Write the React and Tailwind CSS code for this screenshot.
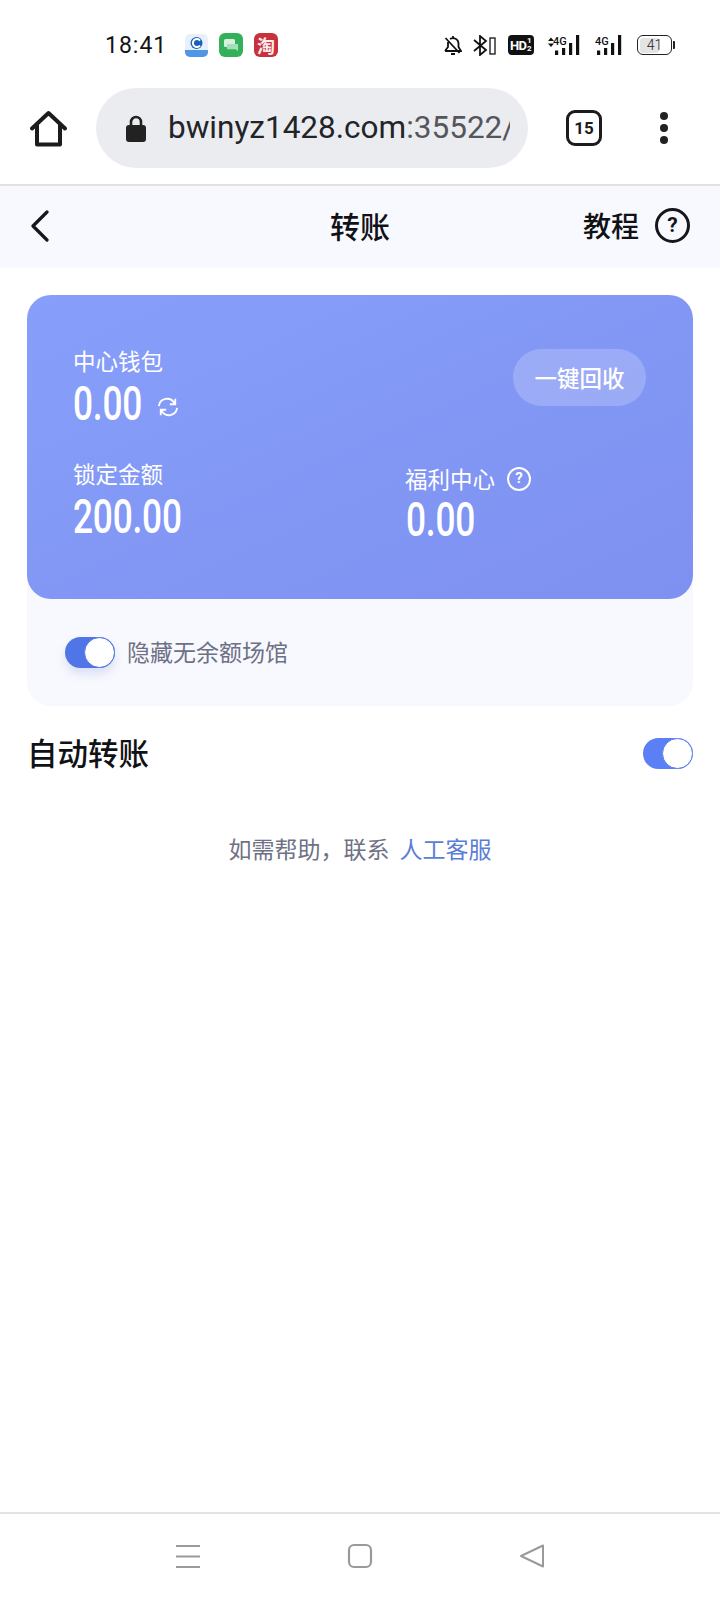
import React from "react";

const font = { fontFamily: '"Noto Sans CJK SC", Roboto, sans-serif' };

function Toggle({ shadow, dark }) {
  return (
    <div className={`relative flex h-[31px] w-[50px] shrink-0 items-center justify-end rounded-full ${dark ? "bg-[#5075e6]" : "bg-[#5b80f5]"} ${shadow ? "shadow-[0_6px_10px_rgba(90,110,200,0.18)]" : ""}`}>
      <div className={`box-border h-[31px] w-[31px] rounded-full border ${dark ? "border-[#5075e6]" : "border-[#5b80f5]"} bg-white`} />
    </div>
  );
}

function Amount({ children }) {
  return (
    <div className="mt-[8px] h-[44px] origin-left scale-x-[0.72] font-['Roboto'] text-[49px] leading-[44px] font-medium tracking-[-0.3px] text-white">
      {children}
    </div>
  );
}

function Signal({ up }) {
  return (
    <svg width={up ? 38 : 30} height="20" viewBox={up ? "0 0 38 20" : "0 0 30 20"} fill="#111">
      {up && <path d="M3 6 6 2.500 9 6ZM3 8.500 6 12 9 8.500Z" />}
      <g transform={up ? "translate(8 0)" : "translate(0 0)"}>
        <text x="0" y="10" fontFamily="Roboto" fontWeight="500" fontSize="11">4G</text>
        <rect x="2" y="15.500" width="3.200" height="4.500" />
        <rect x="9" y="13" width="3.200" height="7" />
        <rect x="16" y="8" width="3.200" height="12" />
        <rect x="23" y="0" width="3.200" height="20" />
      </g>
    </svg>
  );
}

function StatusBar() {
  return (
    <div className="flex h-[88px] items-center pt-[2px] pl-[105px] pr-[45px]">
      <span className="w-[80px] font-['Roboto'] text-[23px] leading-none tracking-[1px] text-[#151515]">18:41</span>
      <div className="flex items-center gap-[11px]">
        <svg width="23" height="23" viewBox="0 0 23 23">
          <rect width="23" height="23" rx="5" fill="#e8f1fb" />
          <circle cx="11.500" cy="9" r="6" fill="#1a62b8" />
          <path d="M15 6.500a4 4 0 1 0 0 5" fill="none" stroke="#fff" strokeWidth="2" />
          <path d="M0 16h23v2a5 5 0 0 1-5 5H5a5 5 0 0 1-5-5Z" fill="#4f96e6" />
        </svg>
        <svg width="24" height="24" viewBox="0 0 24 24">
          <rect width="24" height="24" rx="6" fill="#35b05a" />
          <rect x="5" y="6" width="11" height="8" rx="1.500" fill="#d6f2de" />
          <path d="M8 11h11v7l-2.500-1.800H8Z" fill="#a4dfb7" />
        </svg>
        <div className="flex h-[24px] w-[24px] items-center justify-center rounded-[6px] bg-[#c8303c] text-[18px] leading-none font-bold text-[#fdecec]">淘</div>
      </div>
      <div className="ml-auto flex items-center">
        <svg width="18" height="21" viewBox="0 0 18 21" fill="none" stroke="#111" strokeWidth="1.800" className="mr-[11px]">
          <path d="M1 16h16l-2.500-4V8.500A5.500 5.500 0 0 0 6 4M4 7v5l-3 4M9 1v2M7 19h4M1.500 3l14 15" />
        </svg>
        <svg width="23" height="21" viewBox="0 0 23 21" fill="none" stroke="#111" strokeWidth="1.800" className="mr-[12px]">
          <path d="M1 5l12 10-6 5V1l6 5L1 16" />
          <rect x="17" y="3" width="5" height="16" strokeWidth="1.300" />
        </svg>
        <div className="mr-[11px] flex h-[20px] w-[26px] items-center rounded-[4px] bg-[#111] pl-[2px] font-['Roboto'] text-[13px] leading-none font-bold tracking-[-0.8px] text-white">HD<span className="ml-[1px] text-[8px] leading-[8px] font-bold">1<br />2</span></div>
        <div className="mr-[12px]"><Signal up /></div>
        <div className="mr-[12px]"><Signal /></div>
        <div className="relative flex h-[20px] w-[35px] items-center justify-center rounded-[6px] border-[1.500px] border-[#222] bg-white">
          <div className="absolute inset-y-[1.500px] left-[1.500px] w-[19px] rounded-[3px] bg-[#e4e4e4]" />
          <span className="relative font-['Roboto'] text-[14px] leading-none font-light text-[#222]">41</span>
        </div>
        <div className="ml-px h-[8px] w-[2px] rounded-r-[1px] bg-[#222]" />
      </div>
    </div>
  );
}

function BrowserBar() {
  return (
    <div className="flex h-[96px] items-start pb-[16px]">
      <div className="flex h-[80px] w-[96px] items-center justify-center">
        <svg width="37" height="37" viewBox="0 0 37 37" fill="none" stroke="#1c1c1e" strokeWidth="4" strokeLinejoin="round" strokeLinecap="round">
          <path d="M2 18.500 18.500 3 35 18.500M7 15v19.500h23V15" />
        </svg>
      </div>
      <div className="flex h-[80px] w-[432px] items-center overflow-hidden rounded-full bg-[#ebecf0] pl-[30px]">
        <svg width="20" height="27" viewBox="0 0 20 27" className="shrink-0">
          <path d="M5 12V7a5 5 0 0 1 10 0v5" fill="none" stroke="#222" strokeWidth="2.600" />
          <rect y="10" width="20" height="17" rx="3" fill="#222" />
        </svg>
        <div className="ml-[22px] w-[342px] overflow-hidden font-['Roboto'] text-[31.500px] leading-none whitespace-nowrap text-[#222428]">
          bwinyz1428.com<span className="text-[#54565c]">:35522/</span>
        </div>
      </div>
      <div className="ml-[38px] flex h-[80px] items-center">
        <div className="flex h-[36px] w-[36px] items-center justify-center rounded-[9px] border-[3.500px] border-[#1c1c1e] font-['Roboto'] text-[17px] leading-none font-bold text-[#1c1c1e]">15</div>
      </div>
      <div className="ml-[58px] flex h-[80px] flex-col items-center justify-center gap-[4px]">
        <div className="h-[8px] w-[8px] rounded-full bg-[#222]" />
        <div className="h-[8px] w-[8px] rounded-full bg-[#222]" />
        <div className="h-[8px] w-[8px] rounded-full bg-[#222]" />
      </div>
    </div>
  );
}

export default function App() {
  return (
    <div style={font} className="flex h-[1600px] w-[720px] flex-col overflow-hidden bg-white">
      <StatusBar />
      <BrowserBar />
      <div className="h-[2px] bg-[#e1e1e5]" />
      <div className="relative flex h-[82px] items-center justify-center bg-[#f8f9fe]">
        <svg width="18" height="32" viewBox="0 0 18 32" fill="none" stroke="#16171c" strokeWidth="3.200" strokeLinecap="round" strokeLinejoin="round" className="absolute left-[31px] top-[24px]">
          <path d="M16 2 2 16l14 14" />
        </svg>
        <span className="-mt-[4px] text-[30px] leading-none font-medium text-[#111216]">转账</span>
        <div className="absolute right-[30px] top-0 flex h-full items-center gap-[16px] pb-[3px]">
          <span className="-mt-[1px] text-[28px] leading-none font-medium text-[#111216]">教程</span>
          <div className="flex h-[35px] w-[35px] items-center justify-center rounded-full border-[3px] border-[#16171c] font-['Roboto'] text-[21px] leading-none font-bold text-[#16171c]">?</div>
        </div>
      </div>

      <div className="px-[27px] pt-[27px]">
        <div className="h-[411px] rounded-[24px] bg-[#f8f9fe]">
          <div className="h-[304px] rounded-[24px] bg-gradient-to-br from-[#879ffa] to-[#7e90f0] pl-[46px] pr-[47px] pt-[52px] text-white">
            <div className="flex items-start justify-between">
              <div>
                <div className="h-[27px] text-[22.500px] leading-[27px] font-normal">中心钱包</div>
                <div className="flex items-center">
                  <div className="w-[84px]"><Amount>0.00</Amount></div>
                  <svg width="22" height="20" viewBox="0 0 24 22" fill="none" stroke="#fff" strokeWidth="2" className="mt-[14px]">
                    <path d="M2 10a9 9 0 0 1 17-3M22 12a9 9 0 0 1-17 3M20 2v6h-6M4 20v-6h6" />
                  </svg>
                </div>
              </div>
              <div className="mt-[2px] flex h-[57px] w-[133px] items-center justify-center rounded-full bg-white/20 text-[22.500px] leading-none font-medium">一键回收</div>
            </div>
            <div className="mt-[34px] grid grid-cols-[332px_1fr]">
              <div>
                <div className="h-[27px] text-[22.500px] leading-[27px] font-normal">锁定金额</div>
                <Amount>200.00</Amount>
              </div>
              <div className="pt-[5px]">
                <div className="-mb-[2px] flex h-[27px] items-center">
                  <span className="text-[22.500px] leading-[27px] font-normal">福利中心</span>
                  <div className="ml-[12px] flex h-[24px] w-[24px] items-center justify-center rounded-full border-2 border-white font-['Roboto'] text-[15px] leading-none font-bold">?</div>
                </div>
                <div className="pl-[1px]"><Amount>0.00</Amount></div>
              </div>
            </div>
          </div>
          <div className="flex items-center gap-[12px] pl-[38px] pt-[38px]">
            <Toggle shadow dark />
            <span className="-mt-[3px] text-[23px] leading-[31px] font-normal text-[#6d7086]">隐藏无余额场馆</span>
          </div>
        </div>

        <div className="mt-[26px] flex h-[42px] items-center justify-between">
          <span className="-mt-[2px] text-[30.500px] leading-none font-medium text-[#111216]">自动转账</span>
          <Toggle />
        </div>

        <div className="mt-[58px] flex justify-center gap-[10px] text-[23px] leading-[32px] font-normal">
          <span className="text-[#6f7184]">如需帮助，联系</span>
          <span className="text-[#5a7ed6]">人工客服</span>
        </div>
      </div>

      <div className="mt-auto flex h-[88px] items-center justify-between border-t-2 border-[#e3e3e3] pl-[175px] pr-[175px] pb-[2px]">
        <svg width="26" height="25" viewBox="0 0 26 25" stroke="#9a9a9a" strokeWidth="2">
          <path d="M1 2h24M1 12.500h24M1 23h24" />
        </svg>
        <svg width="26" height="26" viewBox="0 0 26 26" fill="none" stroke="#9a9a9a" strokeWidth="2.200">
          <rect x="2" y="2" width="22" height="22" rx="5" />
        </svg>
        <svg width="26" height="26" viewBox="0 0 26 26" fill="none" stroke="#9a9a9a" strokeWidth="2" strokeLinejoin="round">
          <path d="M24 2.500v21L2 13Z" />
        </svg>
      </div>
    </div>
  );
}
